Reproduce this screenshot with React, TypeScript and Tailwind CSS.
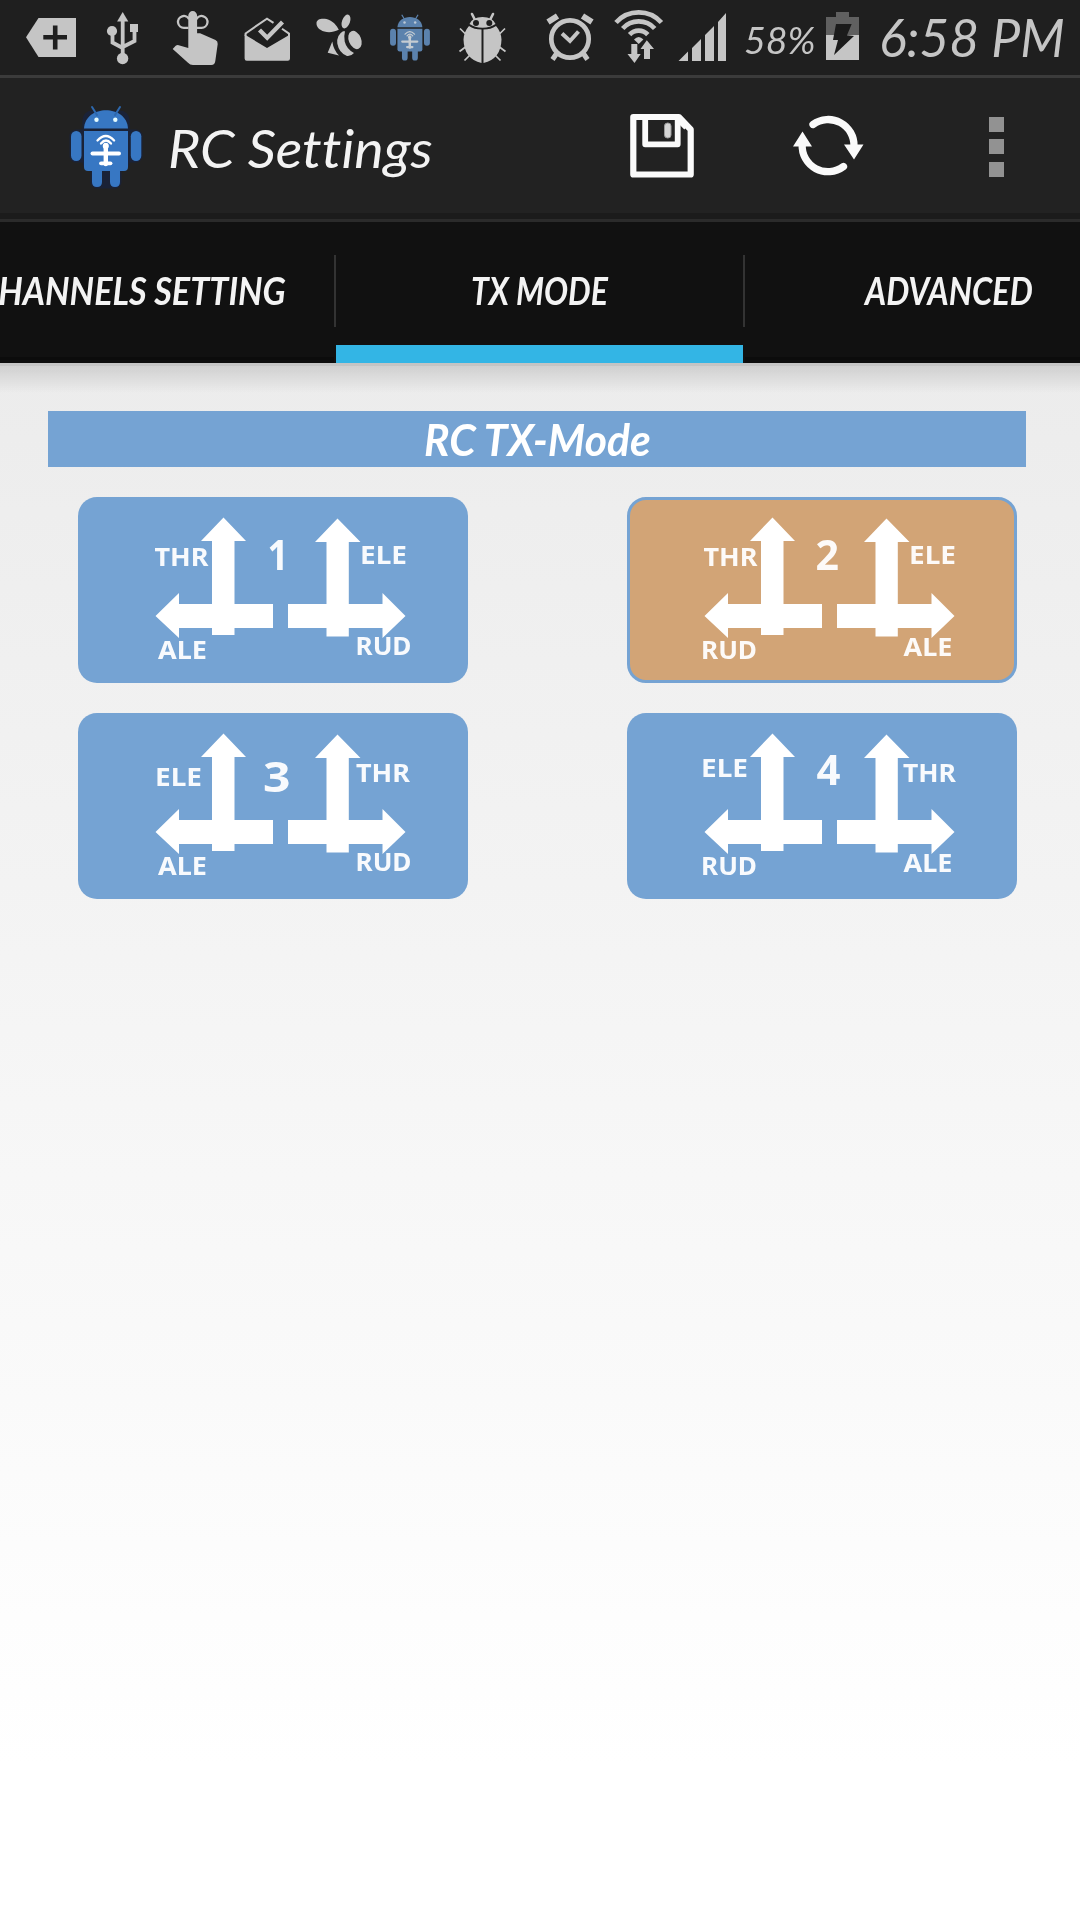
import { useLayoutEffect, useRef, useState } from "react";

/** Single-line text stretched horizontally to an exact pixel width. */
function FitText({ text, width, className }: { text: string; width: number; className: string }) {
  const ref = useRef<HTMLSpanElement>(null);
  const [scale, setScale] = useState(1);
  useLayoutEffect(() => {
    if (ref.current) setScale(width / ref.current.offsetWidth);
  }, [text, width]);
  return (
    <span className="block shrink-0" style={{ width }}>
      <span
        ref={ref}
        className={"inline-block origin-left whitespace-nowrap font-['Lato',sans-serif] italic [font-variant-ligatures:none] " + className}
        style={{ transform: `scaleX(${scale})` }}
      >
        {text}
      </span>
    </span>
  );
}

function Robot({ dim }: { dim?: boolean }) {
  return (
    <>
      <g fill={dim ? "#5b82ad" : "#3777c3"}>
        <path d="M84 128.5 C85 104 127 104 128 128.5Z" />
        <path d="M92 107l5 8M120 107l-5 8" stroke={dim ? "#5b82ad" : "#2d68ae"} strokeWidth="2" strokeLinecap="round" />
        <path d="M84 131h44v36q0 4-4 4h-36q-4 0-4-4z" />
        <rect x="71" y="131" width="10.5" height="30" rx="5.2" />
        <rect x="130.8" y="131" width="10.5" height="30" rx="5.2" />
        <path d="M92 170h10v12q0 5-5 5t-5-5zM110 170h10v12q0 5-5 5t-5-5z" />
      </g>
      <circle cx="96.5" cy="119.8" r="2.2" fill={dim ? "#bbc8d6" : "#e4fbff"} />
      <circle cx="115.3" cy="119.8" r="2.2" fill={dim ? "#bbc8d6" : "#e4fbff"} />
      <g stroke={dim ? "#c5ccd2" : "#fff"} fill="none" strokeLinecap="round">
        <path d="M97.5 140.500q8.300-9 16.600 0M101 143.500q5-6 10 0" strokeWidth="2.300" />
        <path d="M105.800 145v19" strokeWidth="4.400" />
        <path d="M92.500 153.500h26.500" strokeWidth="4" />
        <path d="M101 163.300h9.500" strokeWidth="3.800" />
        <circle cx="105.800" cy="146" r="1.800" strokeWidth="2.500" />
      </g>
    </>
  );
}

function StatusBar() {
  return (
    <div className="flex h-[75px] w-full bg-[#1f1f1f] text-[#c5c5c5]">
      <svg className="h-[75px] w-[99px] shrink-0" viewBox="0 0 99 75" fill="currentColor">
        <path d="M26 37.300 38.500 18H76v39H38.500z" />
        <path d="M43.300 37.300H67M55.200 25.500V49.500" stroke="#1f1f1f" strokeWidth="4.600" />
      </svg>
      <svg className="h-[75px] w-[66px] shrink-0" viewBox="99 0 66 75" fill="currentColor">
        <path d="m122.700 12 5.600 9.500h-11.200z" />
        <path d="M122.700 20v35M112.500 32v10.500l10.200 5.500M134.500 30v11l-11.800 6" fill="none" stroke="currentColor" strokeWidth="3.800" />
        <circle cx="112" cy="31" r="5.100" />
        <rect x="130" y="24" width="8" height="8" />
        <circle cx="122.600" cy="58.500" r="5.700" />
      </svg>
      <svg className="h-[75px] w-[68px] shrink-0" viewBox="165 0 68 75" fill="currentColor">
        <path
          d="M188.500 27.800H184a5.900 5.900 0 1 1 5.200-8.500M196.500 27.800h5a5.900 5.900 0 1 0-5.200-8.500"
          fill="none"
          stroke="currentColor"
          strokeWidth="2.300"
        />
        <path d="M188.300 48V15.500a4.400 4.400 0 0 1 8.800 0V33.200h3L215.500 40q2.400 1 2.200 4L215.300 61q-.5 4-4 4H193q-3 0-5-2.200L172.700 49l3-3.200q1.400-1 3-.6z" />
      </svg>
      <svg className="h-[75px] w-[72px] shrink-0" viewBox="233 0 72 75" fill="currentColor">
        <path d="M244.600 34.500 267 48l23-13.500V58.500q0 2.200-2.200 2.200H246.800q-2.200 0-2.200-2.200z" />
        <path d="M245.600 36V33.400L267 18.600l6.500 4.300M282 28.800l7 4.800V37" fill="none" stroke="currentColor" strokeWidth="2" />
        <path d="m259.500 30 7.700 7.700L282.500 22" fill="none" stroke="currentColor" strokeWidth="4.300" />
      </svg>
      <svg className="h-[75px] w-[70px] shrink-0" viewBox="305 0 70 75" fill="currentColor">
        <path d="M316.500 23c0-4 5-5 10-4 6 1.500 10.500 6.500 12.300 10.800-5.300 2.600-10 3-14.500 1.800-5-1.600-8-4.800-7.800-8.600z" />
        <ellipse cx="346" cy="21.500" rx="4" ry="7.200" transform="rotate(20 346 21.500)" />
        <ellipse cx="355" cy="40" rx="6.200" ry="9.500" transform="rotate(-22 355 40)" />
        <path d="M343 31.300Q336.500 35 337.300 43.500 339 53 347 56q4 .5 7-3Q346.500 49 344.700 41.500 343.700 36 345 31.300z" />
        <path d="M332.300 41.500q1.200 8.500 6.700 14l-11.300-2.800z" />
      </svg>
      <svg className="h-[75px] w-[70px] shrink-0" viewBox="375 0 70 75">
        <g transform="translate(349.800 -45.500) scale(.567)">
          <Robot dim />
        </g>
      </svg>
      <svg className="h-[75px] w-[82px] shrink-0" viewBox="445 0 82 75" fill="currentColor">
        <path d="m472 14 3 6M493 14l-3 6" stroke="currentColor" strokeWidth="2.600" strokeLinecap="round" />
        <path d="m460 28.500 7 7M459.500 51.500l6-4.500M464.500 60.500l6-6M505 28.500l-7 7M505.500 51.500l-6-4.500M500.500 60.500l-6-6" stroke="currentColor" strokeWidth="1.700" />
        <path d="M469.500 24q3-7 13-7t13 7q-5 3.700-13 3.700t-13-3.700z" />
        <path d="M469 26q5 3.500 12.500 3.500V63Q464 59 463.500 39.500q.5-8 5.500-13.500zM496 26q-5 3.500-12.500 3.500V63Q501 59 501.500 39.500q-.5-8-5.500-13.500z" />
        <circle cx="476" cy="23" r="3" fill="#1f1f1f" />
        <circle cx="489.300" cy="23" r="3" fill="#1f1f1f" />
      </svg>
      <svg className="h-[75px] w-[77px] shrink-0" viewBox="527 0 77 75" fill="none" stroke="currentColor">
        <circle cx="570" cy="39" r="18.700" strokeWidth="4.700" />
        <path d="m562 33.500 8 7.500 8.500-9.500" strokeWidth="4" />
        <path d="m548 22 9.500-6M592 22l-9.500-6" strokeWidth="6" />
        <path d="m557 53-4.500 6.500M583 53l4.500 6.500" strokeWidth="5" />
      </svg>
      <svg className="h-[75px] w-[67px] shrink-0" viewBox="604 0 67 75" fill="currentColor">
        <g fill="none" stroke="currentColor" strokeWidth="4.700">
          <path d="M616 22.500a30.500 30.500 0 0 1 45.400 0" />
          <path d="M622.700 28.500a21.600 21.600 0 0 1 32 0" />
          <path d="M629.600 34.600a12.500 12.500 0 0 1 18.200 0" />
        </g>
        <path d="M634 39.500q4.700-5 9.400 0l-4.700 4.500z" />
        <path d="M631.300 44h6v10h3.400l-6.200 9-7-9h3.800zM644 59V49h-3.500l6.300-8.800 7.200 8.800h-4v10z" />
      </svg>
      <svg className="h-[75px] w-[73px] shrink-0" viewBox="671 0 73 75" fill="currentColor">
        <path d="M678.500 61 688 51.500V61zM692 61V48l9-9v22zM705 61V35l9-9v35zM718 61V22l8-9v48z" />
      </svg>
      <FitText text="58%" width={72} className="mt-[20px] text-[36px] leading-[40px]" />
      <svg className="-ml-px h-[75px] w-[64px] shrink-0" viewBox="815 0 64 75">
        <path d="M836 12h13v5h10v18h-33V17h10z" fill="#606060" />
        <path d="M826 35h33v25h-33z" fill="#c5c5c5" />
        <path d="M836 24h15.700L847 35.300l7 .7L834 55l4-15h-5z" fill="#1b1b1b" />
      </svg>
      <FitText text="6:58 PM" width={186} className="mt-[8px] text-[53px] leading-[58px]" />
    </div>
  );
}

function ActionBar() {
  return (
    <div className="flex h-[135px] bg-[#222222]">
      <svg className="h-[135px] w-[168px] shrink-0" viewBox="0 78 168 135">
        <g stroke="#182241" strokeWidth="3" opacity=".7" fill="#182241">
          <rect x="84" y="112" width="44" height="58" rx="8" />
          <rect x="71" y="131" width="70" height="30" rx="5" />
          <rect x="92" y="168" width="28" height="19" rx="5" />
        </g>
        <Robot />
      </svg>
      <FitText text="RC Settings" width={265} className="mt-[38px] text-[53px] leading-[64px] text-[#f3f3f3]" />
      <svg className="ml-[167px] h-[135px] w-[120px] shrink-0 blur-[0.6px]" viewBox="600 78 120 135" fill="none" stroke="#fafafa" strokeLinejoin="round">
        <path d="M633.300 117h45.500l11.900 12.500v45H633.300z" strokeWidth="6.200" />
        <path d="M645.200 117v27.300h32.500V117" strokeWidth="5.800" />
        <path d="M677.700 120l8 8" strokeWidth="4" />
        <rect x="664.500" y="123" width="6.500" height="15" rx="3" fill="#d5d5d5" stroke="#999" strokeWidth="1" />
      </svg>
      <svg className="ml-[60px] h-[135px] w-[100px] shrink-0 blur-[0.6px]" viewBox="780 78 100 135" fill="none" stroke="#fafafa">
        <path d="M813 124.500a25.800 25.800 0 0 1 41 22" strokeWidth="7.300" strokeLinecap="round" />
        <path d="M843.500 166.500a25.800 25.800 0 0 1-41.300-22" strokeWidth="7.300" strokeLinecap="round" />
        <path d="M844 144.500h19.500l-9.500 15zM793 146.500h19l-9.500-15z" fill="#fafafa" stroke="none" />
      </svg>
      <div className="ml-[109px] flex flex-col gap-[7px] pt-[39px]">
        <i className="block size-[15px] bg-[#929292]" />
        <i className="block size-[15px] bg-[#929292]" />
        <i className="mt-px block size-[15px] bg-[#929292]" />
      </div>
    </div>
  );
}

function Tabs() {
  const label = "text-[38px] leading-[48px] font-bold text-[#f3f3f3]";
  return (
    <div className="flex h-[141px] bg-[#111111]">
      <div className="flex w-[334px] shrink-0 justify-end overflow-hidden border-b-[6px] border-[#0c0c0c] pt-[44px] pr-[48px]">
        <FitText text="CHANNELS SETTING" width={309} className={label} />
      </div>
      <i className="mt-[33px] block h-[72px] w-[2px] bg-[#333333]" />
      <div className="flex w-[407px] shrink-0 justify-center border-b-[18px] border-[#33b5e5] pt-[44px]">
        <FitText text="TX MODE" width={137} className={label} />
      </div>
      <i className="mt-[33px] block h-[72px] w-[2px] bg-[#333333]" />
      <div className="flex flex-1 border-b-[6px] border-[#0c0c0c] pt-[44px] pl-[120px]">
        <FitText text="ADVANCED" width={168} className={label} />
      </div>
    </div>
  );
}

// text, left, baseline, width, font size
type Label = [string, number, number, number, number];

const THR: Label = ["THR", 154.5, 565.5, 54, 25];
const ELE: Label = ["ELE", 360, 564, 47, 25];
const ALE: Label = ["ALE", 158, 658.5, 49, 25];
const RUD: Label = ["RUD", 355.5, 654.5, 56, 25];
const RUD_LEFT: Label = ["RUD", 152, 658.5, 56, 25];
const ALE_RIGHT: Label = ["ALE", 354.5, 656, 49, 25];

const modes: { labels: Label[]; selected?: boolean }[] = [
  { labels: [THR, ["1", 267.5, 569.5, 21, 41], ELE, ALE, RUD] },
  { labels: [THR, ["2", 266.5, 569.5, 23.5, 41], ELE, RUD_LEFT, ALE_RIGHT], selected: true },
  { labels: [["ELE", 155, 569.5, 47, 25], ["3", 263, 575.5, 27.5, 41], ["THR", 356, 566, 54, 25], ALE, RUD] },
  { labels: [["ELE", 152, 561, 47, 25], ["4", 267.5, 569, 24, 41], ["THR", 354, 565.5, 53, 25], RUD_LEFT, ALE_RIGHT] },
];

function ModeCard({ labels, selected }: { labels: Label[]; selected?: boolean }) {
  return (
    <button
      className={
        "block h-[186px] w-[390px] overflow-hidden rounded-[19px] " +
        (selected ? "border-[3px] border-[#75a3d3] bg-[#d2a476]" : "bg-[#75a3d3]")
      }
    >
      <svg
        className={selected ? "-m-[3px] h-[186px] w-[390px] max-w-none blur-[0.7px]" : "h-[186px] w-[390px] blur-[0.7px]"}
        viewBox="78 497 390 186"
        fill="#fff"
      >
        <path d="m223.500 517.500 22.500 23.500h-11.500v94H212v-94h-11z" />
        <path d="M155.500 616 179 593v11h94v24h-94v10z" />
        <path d="m337.500 518.500 23 23.500h-11.700v94.500h-22.300V542H315z" />
        <path d="M405.500 616l-23-23v11H288v24h94.500v10z" />
        {labels.map(([text, x, y, width, size]) => (
          <text
            key={text}
            x={x}
            y={y}
            fontSize={size}
            textLength={width}
            lengthAdjust="spacingAndGlyphs"
            className="font-['Noto_Sans',sans-serif] font-bold"
            opacity=".95"
          >
            {text}
          </text>
        ))}
      </svg>
    </button>
  );
}

export default function App() {
  return (
    <div className="flex h-[1920px] w-[1080px] flex-col overflow-hidden bg-white">
      <StatusBar />
      <div className="h-[3px] bg-[#3b3b3b]" />
      <ActionBar />
      <div className="h-[6px] bg-[#1b1b1b]" />
      <div className="h-[3px] bg-[#2b2b2b]" />
      <Tabs />
      <main className="flex-1 bg-linear-to-b from-[#ececec] to-white to-90%">
        <div className="h-[3px] bg-[#c4c4c4]" />
        <div className="h-[27px] bg-linear-to-b from-black/12 to-transparent" />
        <h2 className="mt-[18px] ml-[48px] flex h-[56px] w-[978px] justify-center bg-[#75a3d3] pt-[4px]">
          <FitText text="RC TX-Mode" width={227} className="text-[43px] leading-[50px] font-bold text-white" />
        </h2>
        <section className="mt-[30px] ml-[78px] grid grid-cols-[390px_390px] gap-x-[159px] gap-y-[30px]">
          {modes.map((mode, i) => (
            <ModeCard key={i} {...mode} />
          ))}
        </section>
      </main>
    </div>
  );
}
